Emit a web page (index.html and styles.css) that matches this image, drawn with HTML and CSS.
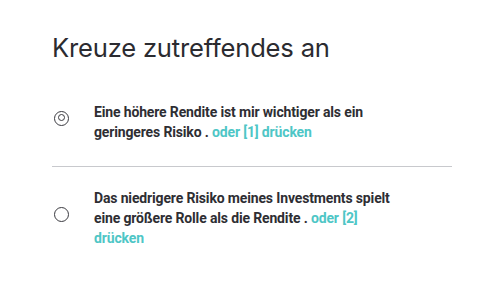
FILE: index.html
```html
<html><head>
<link rel="stylesheet" href="styles.css">
</head>
<body>
  <div class="panel">
    <h1>Kreuze zutreffendes an</h1>
    <div class="choice">
      <span class="radio checked"></span>
      <p>Eine höhere Rendite ist mir wichtiger als ein geringeres Risiko . <span class="key">oder [1] drücken</span></p>
    </div>
    <div class="choice">
      <span class="radio"></span>
      <p>Das niedrigere Risiko meines Investments spielt eine größere Rolle als die Rendite . <span class="key">oder [2] drücken</span></p>
    </div>
  </div>
</body></html>
```

FILE: styles.css
```css
body {
  margin: 0;
  background: #ffffff;
  color: #2e2e33;
  font-family: Roboto, 'Liberation Sans', sans-serif;
}

.panel {
  width: 400px;
  padding: 30px 0 0 52px;
}

h1 {
  margin: 0 0 36px 0;
  font-family: Inter, Roboto, sans-serif;
  font-weight: 400;
  font-size: 25.6px;
  line-height: 36px;
  letter-spacing: -0.2px;
  color: #2b2b30;
}

.choice {
  display: flex;
  align-items: center;
  gap: 25px;
  padding: 0 0 24px 2px;
}

.choice + .choice {
  border-top: 1px solid #c8c9cd;
  padding-top: 21px;
}

.choice p {
  margin: 0;
  width: 300px;
  font-size: 14px;
  font-weight: 700;
  line-height: 20px;
  letter-spacing: -0.15px;
}

.key {
  color: #4ec6c6;
}

.radio {
  flex: none;
  width: 13px;
  height: 13px;
  margin-bottom: 8px;
  border: 1.5px solid #3a3a40;
  border-radius: 50%;
  position: relative;
}

.radio.checked:after {
  content: '';
  position: absolute;
  left: 2.5px;
  top: 2.5px;
  width: 5px;
  height: 5px;
  border: 1.5px solid #3a3a40;
  border-radius: 50%;
}
```
